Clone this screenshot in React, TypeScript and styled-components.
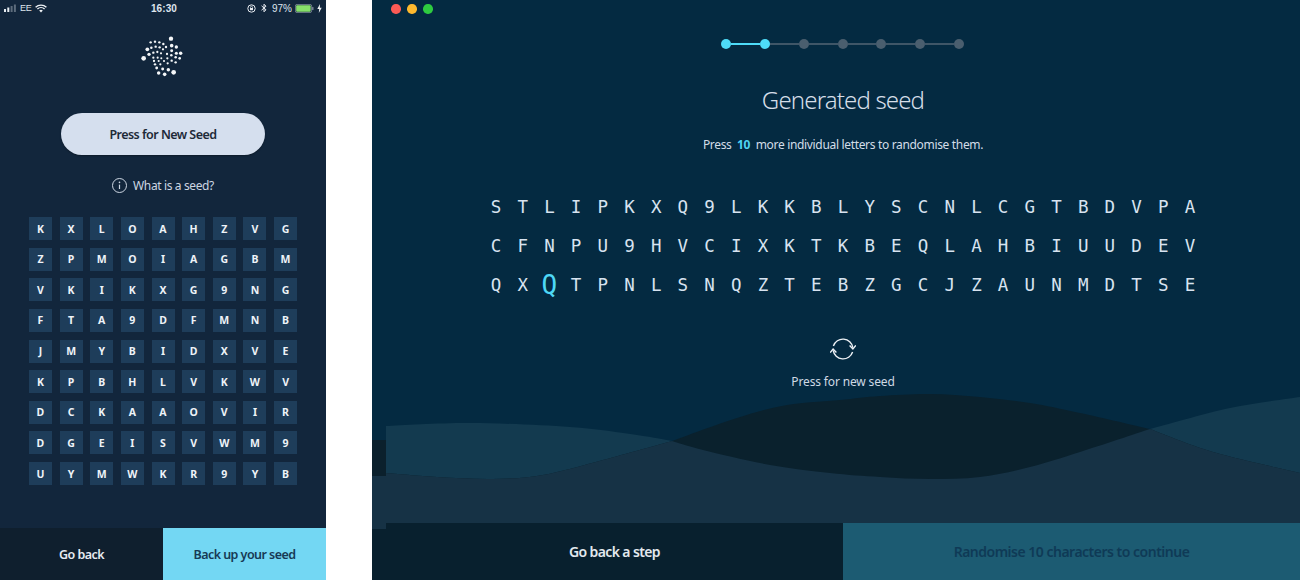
import React from "react";
import styled, { createGlobalStyle } from "styled-components";

const Global = createGlobalStyle`
  html, body { margin: 0; padding: 0; background: #fff; }
  body { width: 1300px; height: 580px; overflow: hidden; font-family: "Noto Sans", "Open Sans", sans-serif; }
  * { box-sizing: border-box; }
`;

const Page = styled.div`
  display: flex;
  width: 1300px;
  height: 580px;
  gap: 46px;
`;

/* ---------- phone ---------- */
const Phone = styled.section`
  width: 326px;
  height: 580px;
  background: #12263c;
  display: flex;
  flex-direction: column;
  align-items: center;
`;
const StatusBar = styled.div`
  width: 100%;
  height: 16px;
  display: grid;
  grid-template-columns: 1fr auto 1fr;
  align-items: center;
  padding: 0 4px;
  color: #dfe5ee;
  font-size: 10px;
  font-family: "Liberation Sans", sans-serif;
`;
const StatusSide = styled.div<{ $end?: boolean }>`
  display: flex;
  align-items: center;
  gap: 3px;
  justify-content: ${(p) => (p.$end ? "flex-end" : "flex-start")};
`;
const Carrier = styled.span`
  font-size: 9px;
  letter-spacing: -0.2px;
`;
const Clock = styled.span`
  font-weight: 700;
  font-size: 10px;
  letter-spacing: 0.1px;
  margin-left: 2px;
`;
const LogoWrap = styled.div`
  margin-top: 20px;
  height: 42px;
  display: flex;
`;
const PillButton = styled.button`
  margin-top: 35px;
  width: 204px;
  height: 42px;
  border: 0;
  border-radius: 21px;
  background: #d5dfee;
  color: #1d2a38;
  font: 600 12.5px "Noto Sans", sans-serif;
  letter-spacing: -0.53px;
  box-shadow: 0 1px 2px rgba(0, 0, 0, 0.3);
`;
const Help = styled.div`
  margin-top: 20px;
  height: 20px;
  display: flex;
  align-items: center;
  gap: 6px;
  color: #cdd6e2;
  font-size: 12px;
  letter-spacing: -0.37px;
`;
const TileGrid = styled.div`
  margin-top: 22px;
  display: grid;
  grid-template-columns: repeat(9, 23px);
  grid-auto-rows: 23px;
  gap: 7.65px;
`;
const Tile = styled.div`
  background: #1e3d5a;
  color: #eef3f8;
  font-size: 10.5px;
  font-weight: 700;
  display: flex;
  align-items: center;
  justify-content: center;
`;
const PhoneFooter = styled.div`
  margin-top: auto;
  width: 100%;
  height: 52px;
  display: grid;
  grid-template-columns: 1fr 1fr;
`;
const PhoneAction = styled.div<{ $primary?: boolean }>`
  display: flex;
  align-items: center;
  justify-content: center;
  font-size: 12.5px;
  font-weight: 600;
  letter-spacing: -0.55px;
  padding-top: 1px;
  background: ${(p) => (p.$primary ? "#73d7f3" : "#0f1f2e")};
  color: ${(p) => (p.$primary ? "#173a55" : "#e6ebf2")};
`;

/* ---------- desktop ---------- */
const Desktop = styled.section`
  position: relative;
  width: 928px;
  height: 580px;
  background: #042a41;
  display: grid;
  grid-template-columns: 14px 914px;
`;
const Strip = styled.div`
  display: flex;
  flex-direction: column;
`;
const StripBand = styled.div<{ $h: number; $c: string }>`
  height: ${(p) => p.$h}px;
  background: ${(p) => p.$c};
`;
const Lights = styled.div`
  position: absolute;
  left: 19px;
  top: 4px;
  display: flex;
  gap: 6.5px;
`;
const Light = styled.span<{ $c: string }>`
  width: 9.5px;
  height: 9.5px;
  border-radius: 50%;
  background: ${(p) => p.$c};
`;
const Main = styled.div`
  position: relative;
  display: flex;
  flex-direction: column;
  align-items: center;
`;
const Stepper = styled.div`
  margin: 39px 1px 0 0;
  display: flex;
  align-items: center;
`;
const Dot = styled.span<{ $on: boolean }>`
  width: 10px;
  height: 10px;
  border-radius: 50%;
  background: ${(p) => (p.$on ? "#4edcf8" : "#4a5e6e")};
`;
const StepLine = styled.span<{ $on: boolean }>`
  width: 28.7px;
  height: 2px;
  background: ${(p) => (p.$on ? "#4edcf8" : "#3f5667")};
`;
const Title = styled.h1`
  margin: 33px 0 0;
  height: 36px;
  line-height: 36px;
  font-size: 24px;
  font-weight: 300;
  color: #d5dee8;
  letter-spacing: -0.85px;
  font-family: "Noto Sans", sans-serif;
`;
const Sub = styled.p`
  margin: 18px 0 0;
  height: 18px;
  line-height: 18px;
  font-size: 12px;
  color: #d3dde8;
  letter-spacing: -0.33px;
  white-space: pre;
`;
const Count = styled.b`
  color: #4ed5f2;
  font-weight: 700;
`;
const SeedGrid = styled.div`
  margin-top: 33px;
  display: grid;
  grid-template-columns: repeat(27, 26.7px);
  grid-auto-rows: 39px;
`;
const SeedChar = styled.span<{ $hot?: boolean }>`
  display: flex;
  align-items: center;
  justify-content: center;
  font-family: "DejaVu Sans Mono", "Liberation Mono", monospace;
  font-size: ${(p) => (p.$hot ? "26px" : "17.5px")};
  color: ${(p) => (p.$hot ? "#4ed8f6" : "#d8e3f0")};
`;
const RefreshWrap = styled.div`
  margin-top: 32px;
  height: 26px;
  display: flex;
`;
const Caption = styled.div`
  margin-top: 11px;
  height: 18px;
  line-height: 18px;
  font-size: 12px;
  letter-spacing: -0.15px;
  color: #cfd9e4;
`;
const WaveArt = styled.svg`
  position: absolute;
  left: 0;
  top: 380px;
`;
const DeskFooter = styled.div`
  position: absolute;
  left: 0;
  right: 0;
  bottom: 0;
  height: 57px;
  display: grid;
  grid-template-columns: 457px 457px;
`;
const DeskAction = styled.div<{ $primary?: boolean }>`
  display: flex;
  align-items: center;
  justify-content: center;
  font-size: 14px;
  font-weight: 600;
  letter-spacing: ${(p) => (p.$primary ? "-0.5px" : "-0.63px")};
  background: ${(p) => (p.$primary ? "#1c5b72" : "#08202e")};
  color: ${(p) => (p.$primary ? "#0f3a56" : "#e3e9ef")};
`;

/* ---------- drawings ---------- */
type P = [number, number];
function smooth(pts: P[]): string {
  let d = "";
  for (let i = 0; i < pts.length - 1; i++) {
    const p0 = pts[Math.max(i - 1, 0)];
    const p1 = pts[i];
    const p2 = pts[i + 1];
    const p3 = pts[Math.min(i + 2, pts.length - 1)];
    const c1x = p1[0] + (p2[0] - p0[0]) / 6;
    const c1y = p1[1] + (p2[1] - p0[1]) / 6;
    const c2x = p2[0] - (p3[0] - p1[0]) / 6;
    const c2y = p2[1] - (p3[1] - p1[1]) / 6;
    d += ` C${c1x} ${c1y} ${c2x} ${c2y} ${p2[0]} ${p2[1]}`;
  }
  return d;
}
const A1: P[] = [[0, 46], [84, 43], [184, 47], [251, 55], [286, 61]];
const A2: P[] = [[286, 61], [317, 70], [384, 85], [444, 93], [494, 97], [544, 99], [594, 97], [644, 87], [694, 72], [764, 49]];
const A3: P[] = [[764, 49], [844, 28], [914, 17]];
const B1: P[] = [[0, 93], [51, 97], [107, 99], [157, 95], [217, 80], [286, 61]];
const B2: P[] = [[286, 61], [351, 38], [401, 25], [454, 20], [494, 16], [544, 14], [594, 17], [644, 23], [694, 33], [764, 49]];
const B3: P[] = [[764, 49], [827, 72], [914, 93]];
const close = " L914 143 L0 143 Z";
const start = (p: P) => `M${p[0]} ${p[1]}`;

const Waves = () => (
  <WaveArt width="914" height="143" viewBox="0 0 914 143">
    <path fill="#133a4f" d={start(A1[0]) + smooth(A1) + smooth(A2) + smooth(A3) + close} />
    <path fill="#0a212d" d={start(B1[0]) + smooth(B1) + smooth(B2) + smooth(B3) + close} />
    <path fill="#163245" d={start(B1[0]) + smooth(B1) + smooth(A2) + smooth(B3) + close} />
  </WaveArt>
);

const logoDots: [number, number, number][] = [
  [141, 41, 6.5], [59, 100, 7], [149, 142, 7],
  [80, 52, 3.6], [93, 50, 3.6], [106, 52, 3.6], [118, 57, 3.6], [126, 66, 3.6],
  [70, 73, 5.6], [82, 68, 3.8], [95, 65, 3.6], [107, 67, 3.6], [117, 73, 3.4],
  [75, 88, 5], [88, 83, 3.6], [100, 81, 3.4], [111, 85, 3.2],
  [143, 62, 5.4], [157, 66, 5], [143, 77, 4.4], [157, 85, 4.6], [170, 85, 5.2],
  [142, 91, 3.8], [155, 97, 3.8], [167, 100, 4], [130, 100, 3.4], [143, 107, 3.6], [155, 112, 3.6],
  [129, 87, 3.4], [120, 108, 3.2], [131, 115, 3.4],
  [88, 98, 3.4], [90, 108, 3.4], [93, 118, 3.6], [101, 98, 3.2], [104, 108, 3.2], [109, 118, 3.4],
  [98, 129, 4.2], [116, 132, 4.4], [133, 134, 5.2], [104, 144, 5.2], [122, 148, 5.4], [112, 100, 3],
];
const Logo = () => (
  <svg width="46" height="42" viewBox="48 33 138 126">
    {logoDots.map(([x, y, r], i) => (
      <circle key={i} cx={x} cy={y} r={r} fill="#f4f6f8" />
    ))}
  </svg>
);

const Signal = () => (
  <svg width="13" height="8" viewBox="0 0 13 8">
    <rect x="0" y="5" width="2" height="3" fill="#e6ebf1" />
    <rect x="3.3" y="3.5" width="2" height="4.5" fill="#e6ebf1" />
    <rect x="6.6" y="2" width="2" height="6" fill="#5d6c7c" />
    <rect x="9.9" y="0.5" width="2" height="7.5" fill="#5d6c7c" />
  </svg>
);
const Wifi = () => (
  <svg width="12" height="9" viewBox="0 0 12 9" fill="none" stroke="#eef2f6" strokeWidth="1.4">
    <path d="M0.6 3.2 A8 8 0 0 1 11.4 3.2" />
    <path d="M2.4 5 A5.4 5.4 0 0 1 9.6 5" />
    <path d="M6 8.6 L4.2 6.6 A2.8 2.8 0 0 1 7.8 6.6 Z" fill="#eef2f6" stroke="none" />
  </svg>
);
const Lock = () => (
  <svg width="9" height="9" viewBox="0 0 9 9" fill="none" stroke="#e8ecf2" strokeWidth="1">
    <circle cx="4.5" cy="4.5" r="3.7" />
    <rect x="3" y="4" width="3" height="2.2" fill="#e8ecf2" stroke="none" />
    <path d="M3.5 4 V3.3 a1 1 0 0 1 2 0 V4" strokeWidth="0.7" />
  </svg>
);
const Bt = () => (
  <svg width="10" height="10" viewBox="-2 0 10 10" fill="none" stroke="#e8ecf2" strokeWidth="1">
    <path d="M0.5 2.8 L5 6.8 L3 8.8 V1.2 L5 3.2 L0.5 7.2" />
  </svg>
);
const Battery = () => (
  <svg width="19" height="9" viewBox="0 0 21 9" preserveAspectRatio="none">
    <rect x="0.4" y="0.4" width="18" height="8.2" rx="1.8" fill="none" stroke="#8b97a3" strokeWidth="0.8" />
    <rect x="1.3" y="1.3" width="16" height="6.4" rx="1" fill="#86e06a" />
    <rect x="19" y="3" width="1.4" height="3" rx="0.6" fill="#8b97a3" />
  </svg>
);
const Bolt = () => (
  <svg width="5" height="9" viewBox="0 0 5 9">
    <path d="M3 0 L0.3 5 H2.2 L1.8 9 L4.7 3.8 H2.8 Z" fill="#eef2f6" />
  </svg>
);
const Info = () => (
  <svg width="15" height="15" viewBox="0 0 15 15" fill="none" stroke="#cdd6e2" strokeWidth="1">
    <circle cx="7.5" cy="7.5" r="7" />
    <path d="M7.5 6.6 V11" strokeWidth="1.2" />
    <circle cx="7.5" cy="4.4" r="0.8" fill="#cdd6e2" stroke="none" />
  </svg>
);
const Refresh = () => (
  <svg width="26" height="26" viewBox="0 0 26 26" fill="none" stroke="#eef2f6" strokeWidth="1.4">
    <path d="M3.4 10 A10 10 0 0 1 22.8 11.6" />
    <path d="M22.6 16 A10 10 0 0 1 3.2 14.4" />
    <path d="M19.6 9.6 L22.9 13 L25.8 9.4" />
    <path d="M0.2 16.6 L3.1 13 L6.4 16.4" />
  </svg>
);

const phoneRows = [
  "KXLOAHZVG", "ZPMOIAGBM", "VKIKXG9NG", "FTA9DFMNB", "JMYBIDXVE",
  "KPBHLVKWV", "DCKAAOVIR", "DGEISVWM9", "UYMWKR9YB",
];
const seedRows = [
  "STLIPKXQ9LKKBLYSCNLCGTBDVPA",
  "CFNPU9HVCIXKTKBEQLAHBIUUDEV",
  "QXQTPNLSNQZTEBZGCJZAUNMDTSE",
];

export default function App() {
  return (
    <>
      <Global />
      <Page>
        <Phone>
          <StatusBar>
            <StatusSide>
              <Signal />
              <Carrier>EE</Carrier>
              <Wifi />
            </StatusSide>
            <Clock>16:30</Clock>
            <StatusSide $end>
              <Lock />
              <Bt />
              <span>97%</span>
              <Battery />
              <Bolt />
            </StatusSide>
          </StatusBar>
          <LogoWrap>
            <Logo />
          </LogoWrap>
          <PillButton>Press for New Seed</PillButton>
          <Help>
            <Info />
            What is a seed?
          </Help>
          <TileGrid>
            {phoneRows.flatMap((r, y) =>
              r.split("").map((c, x) => <Tile key={`${y}-${x}`}>{c}</Tile>)
            )}
          </TileGrid>
          <PhoneFooter>
            <PhoneAction>Go back</PhoneAction>
            <PhoneAction $primary>Back up your seed</PhoneAction>
          </PhoneFooter>
        </Phone>
        <Desktop>
          <Strip>
            <StripBand $h={440} $c="transparent" />
            <StripBand $h={36} $c="#0b202c" />
            <StripBand $h={53} $c="#163245" />
            <StripBand $h={51} $c="#08202e" />
          </Strip>
          <Main>
            <Waves />
            <Stepper>
              {[0, 1, 2, 3, 4, 5, 6].map((i) => (
                <React.Fragment key={i}>
                  {i > 0 && <StepLine $on={i === 1} />}
                  <Dot $on={i < 2} />
                </React.Fragment>
              ))}
            </Stepper>
            <Title>Generated seed</Title>
            <Sub>
              Press  <Count>10</Count>  more individual letters to randomise them.
            </Sub>
            <SeedGrid>
              {seedRows.flatMap((r, y) =>
                r.split("").map((c, x) => (
                  <SeedChar key={`${y}-${x}`} $hot={y === 2 && x === 2}>
                    {c}
                  </SeedChar>
                ))
              )}
            </SeedGrid>
            <RefreshWrap>
              <Refresh />
            </RefreshWrap>
            <Caption>Press for new seed</Caption>
            <DeskFooter>
              <DeskAction>Go back a step</DeskAction>
              <DeskAction $primary>Randomise 10 characters to continue</DeskAction>
            </DeskFooter>
          </Main>
          <Lights>
            <Light $c="#fb5a55" />
            <Light $c="#fdb92e" />
            <Light $c="#2ecb40" />
          </Lights>
        </Desktop>
      </Page>
    </>
  );
}
